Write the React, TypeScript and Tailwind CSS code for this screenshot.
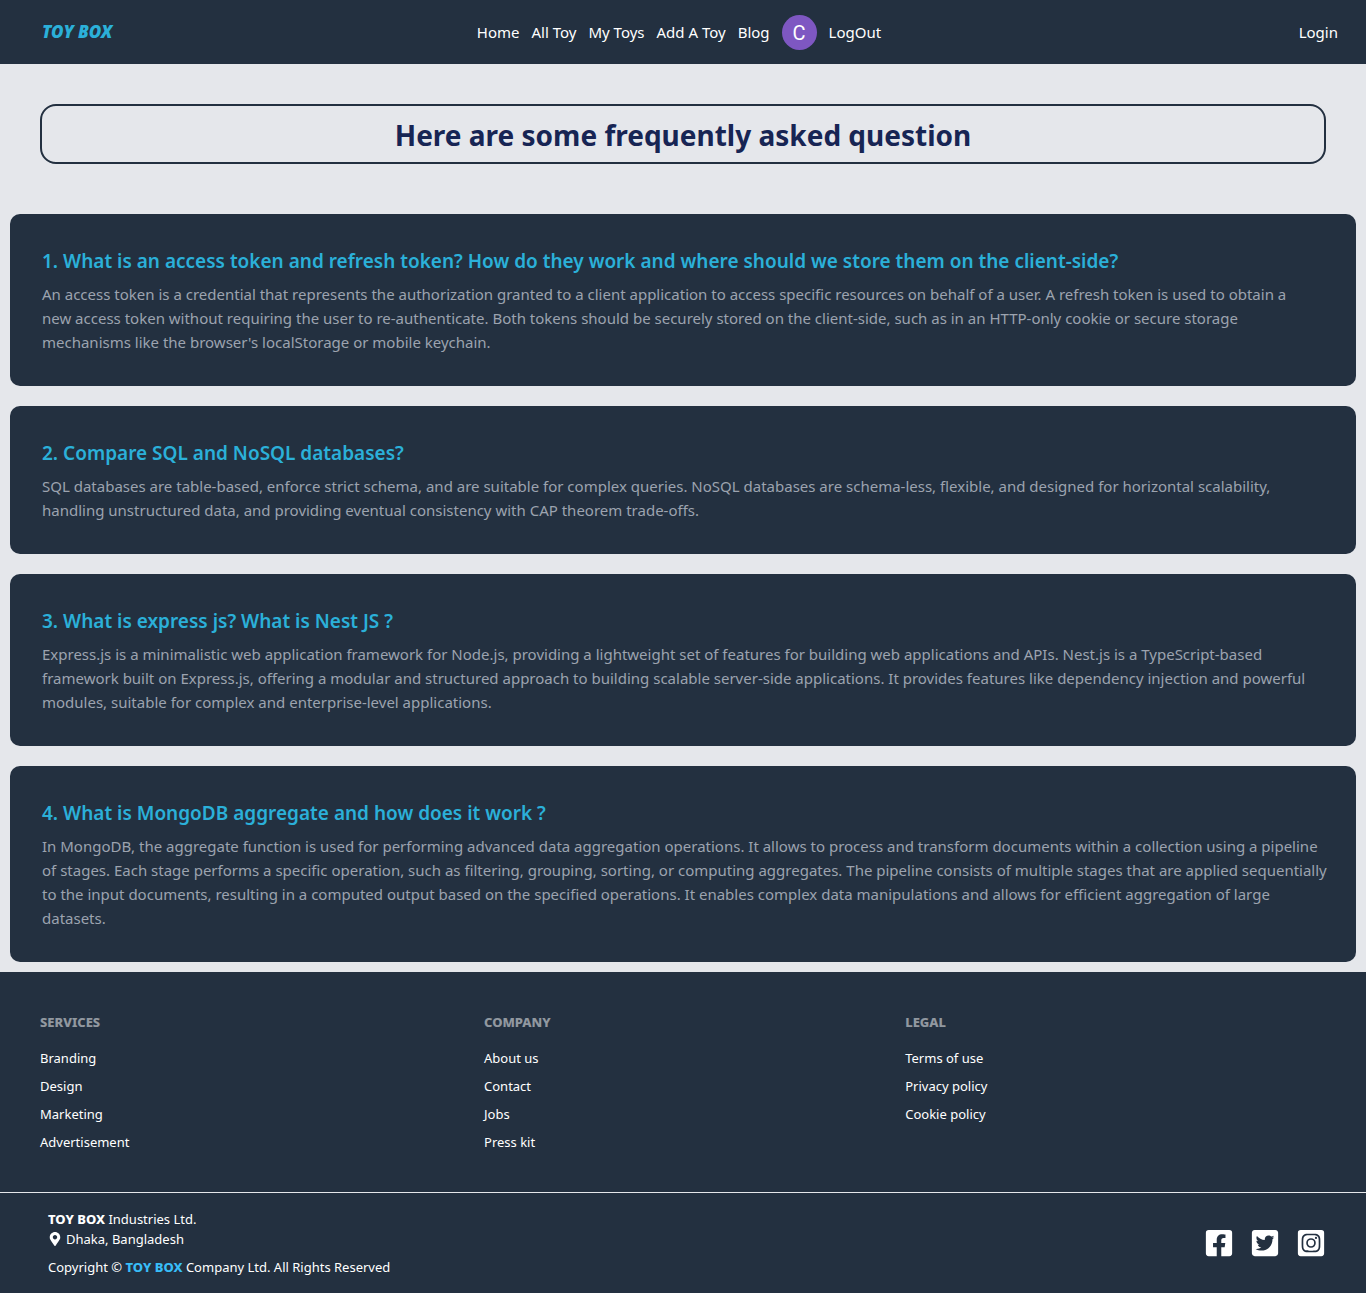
import React from "react";
import { FaFacebookSquare, FaInstagramSquare, FaMapMarkerAlt, FaTwitterSquare } from "react-icons/fa";

const navLinks = ["Home", "All Toy", "My Toys", "Add A Toy", "Blog"];

const questions = [
  {
    title: "1. What is an access token and refresh token? How do they work and where should we store them on the client-side?",
    answer:
      "An access token is a credential that represents the authorization granted to a client application to access specific resources on behalf of a user. A refresh token is used to obtain a\nnew access token without requiring the user to re-authenticate. Both tokens should be securely stored on the client-side, such as in an HTTP-only cookie or secure storage\nmechanisms like the browser's localStorage or mobile keychain.",
  },
  {
    title: "2. Compare SQL and NoSQL databases?",
    answer:
      "SQL databases are table-based, enforce strict schema, and are suitable for complex queries. NoSQL databases are schema-less, flexible, and designed for horizontal scalability,\nhandling unstructured data, and providing eventual consistency with CAP theorem trade-offs.",
  },
  {
    title: "3. What is express js? What is Nest JS ?",
    answer:
      "Express.js is a minimalistic web application framework for Node.js, providing a lightweight set of features for building web applications and APIs. Nest.js is a TypeScript-based\nframework built on Express.js, offering a modular and structured approach to building scalable server-side applications. It provides features like dependency injection and powerful\nmodules, suitable for complex and enterprise-level applications.",
  },
  {
    title: "4. What is MongoDB aggregate and how does it work ?",
    answer:
      "In MongoDB, the aggregate function is used for performing advanced data aggregation operations. It allows to process and transform documents within a collection using a pipeline\nof stages. Each stage performs a specific operation, such as filtering, grouping, sorting, or computing aggregates. The pipeline consists of multiple stages that are applied sequentially\nto the input documents, resulting in a computed output based on the specified operations. It enables complex data manipulations and allows for efficient aggregation of large\ndatasets.",
  },
];

const footerColumns = [
  { title: "Services", links: ["Branding", "Design", "Marketing", "Advertisement"] },
  { title: "Company", links: ["About us", "Contact", "Jobs", "Press kit"] },
  { title: "Legal", links: ["Terms of use", "Privacy policy", "Cookie policy"] },
];

const socials = [
  { label: "Facebook", Icon: FaFacebookSquare },
  { label: "Twitter", Icon: FaTwitterSquare },
  { label: "Instagram", Icon: FaInstagramSquare },
];

function Navbar() {
  return (
    <header className="grid h-16 grid-cols-[1fr_auto_1fr] items-center bg-[#233040] pr-7 pl-5 text-[15px] leading-6 text-white">
      <a href="#" className="justify-self-start pl-[22px] text-[17px] font-black text-[#2bb0d9] italic">
        TOY BOX
      </a>
      <nav className="flex items-center gap-3">
        {navLinks.map((label) => (
          <a key={label} href="#">
            {label}
          </a>
        ))}
        <span className="flex size-[35px] items-center justify-center rounded-full bg-[#7e57c2] pt-0.5 font-['Roboto',sans-serif] text-xl">
          C
        </span>
        <button type="button">LogOut</button>
      </nav>
      <a href="#" className="justify-self-end">
        Login
      </a>
    </header>
  );
}

function Footer() {
  return (
    <footer className="bg-[#233040] text-[13px] leading-5 text-white">
      <div className="grid grid-cols-[auto_auto_auto] gap-x-4 p-10">
        {footerColumns.map(({ title, links }) => (
          <nav key={title} className="flex flex-col items-start gap-2">
            <h2 className="mb-2 font-extrabold uppercase opacity-50">{title}</h2>
            {links.map((label) => (
              <a key={label} href="#">
                {label}
              </a>
            ))}
          </nav>
        ))}
      </div>
      <div className="flex items-center justify-between border-t border-gray-200 py-4 pr-10 pl-12">
        <div>
          <p>
            <b className="font-extrabold">TOY BOX</b> Industries Ltd.
          </p>
          <p className="flex items-center gap-1">
            <FaMapMarkerAlt size={14} /> Dhaka, Bangladesh
          </p>
          <p className="mt-2">
            Copyright © <b className="font-extrabold text-[#38bdf8]">TOY BOX</b> Company Ltd. All Rights Reserved
          </p>
        </div>
        <div className="flex gap-4">
          {socials.map(({ label, Icon }) => (
            <a key={label} href="#" aria-label={label}>
              <Icon size={30} />
            </a>
          ))}
        </div>
      </div>
    </footer>
  );
}

export default function App() {
  return (
    <div className="min-h-screen bg-gray-200 font-['Noto_Sans','Open_Sans',sans-serif]">
      <Navbar />
      <main className="pb-2.5">
        <h1 className="mx-10 mt-10 rounded-2xl border-2 border-[#233040] pt-2 pb-1.5 text-center text-[28px] leading-[42px] font-bold text-[#172554]">
          Here are some frequently asked question
        </h1>
        <div className="mx-2.5 mt-[50px] flex flex-col gap-5">
          {questions.map(({ title, answer }) => (
            <article key={title} className="rounded-[10px] bg-[#233040] py-8 pr-5 pl-8">
              <h2 className="mb-1.5 text-[19px] leading-[30px] font-semibold text-[#2bb0d9]">{title}</h2>
              <p className="text-[15px] leading-6 whitespace-pre-line text-[#9ca3af]">{answer}</p>
            </article>
          ))}
        </div>
      </main>
      <Footer />
    </div>
  );
}
